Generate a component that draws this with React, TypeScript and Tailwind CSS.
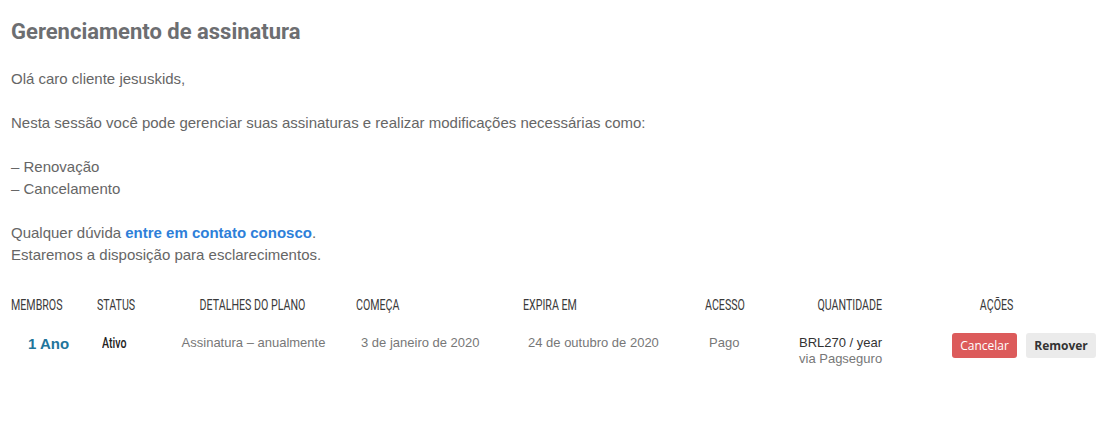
// cabeçalhos em fonte condensada (Oswald no original) — Roboto comprimido na horizontal
const HEAD = "inline-block font-['Roboto',sans-serif] text-[15px] leading-[20px] text-[#3a3a3a] scale-x-[0.71]"

export default function App() {
  return (
    <div className="min-h-[428px] bg-white px-[11px] font-['Liberation_Sans',Arial,sans-serif] text-[15px] leading-[22px] text-[#666]">
      <h1 className="pt-[16px] font-['Roboto',sans-serif] text-[22px] font-bold leading-[32px] text-[#6d6e71]">
        Gerenciamento de assinatura
      </h1>

      <div className="mt-[20px] space-y-[22px]">
        <p>Olá caro cliente jesuskids,</p>
        <p>Nesta sessão você pode gerenciar suas assinaturas e realizar modificações necessárias como:</p>
        <p>
          – Renovação
          <br />– Cancelamento
        </p>
        <p>
          Qualquer dúvida{' '}
          <a href="#" className="font-bold text-[#2e7fd9]">
            entre em contato conosco
          </a>
          .
          <br />
          Estaremos a disposição para esclarecimentos.
        </p>
      </div>

      {/* tabela de assinaturas */}
      <div className="-mx-[11px] mt-[27px]">
        <div className="flex h-[24px] items-center uppercase">
          <div className="w-[85px] pl-[11px]"><span className={`${HEAD} origin-left`}>Membros</span></div>
          <div className="w-[85px] pl-[12px]"><span className={`${HEAD} origin-left`}>Status</span></div>
          <div className="w-[165px] text-center"><span className={`${HEAD} origin-center`}>Detalhes do plano</span></div>
          <div className="w-[175px] pl-[21px]"><span className={`${HEAD} origin-left`}>Começa</span></div>
          <div className="w-[180px] pl-[13px]"><span className={`${HEAD} origin-left`}>Expira em</span></div>
          <div className="w-[80px] pl-[15px]"><span className={`${HEAD} origin-left`}>Acesso</span></div>
          <div className="w-[112px] text-right"><span className={`${HEAD} origin-right`}>Quantidade</span></div>
          <div className="flex-1 pl-[7px] text-center"><span className={`${HEAD} origin-center`}>Ações</span></div>
        </div>

        <div className="mt-[18px] flex items-start text-[13px] leading-[16px] text-[#777]">
          <div className="w-[85px] pl-[28px] text-[15px] font-bold leading-[18px] text-[#21759b]">1 Ano</div>
          <div className="w-[85px] pl-[17px] -mt-[2px]">
            <span className={`${HEAD} origin-left font-medium text-[#222]`}>Ativo</span>
          </div>
          <div className="w-[165px] pl-[2px] text-center">Assinatura – anualmente</div>
          <div className="w-[175px] pl-[26px]">3 de janeiro de 2020</div>
          <div className="w-[180px] pl-[18px]">24 de outubro de 2020</div>
          <div className="w-[80px] pl-[19px]">Pago</div>
          <div className="w-[112px] whitespace-nowrap pl-[29px]">
            <div className="text-[#333]">BRL270 / year</div>
            <div>via Pagseguro</div>
          </div>
          <div className="flex flex-1 -mt-[2px] gap-[9px] pl-[70px] font-['Open_Sans',sans-serif] text-[12px]">
            <button className="h-[25px] w-[65px] rounded-[3px] bg-[#dc5b5b] text-white">Cancelar</button>
            <button className="h-[25px] w-[70px] rounded-[3px] bg-[#ebebeb] font-bold text-[#333]">Remover</button>
          </div>
        </div>
      </div>
    </div>
  )
}
